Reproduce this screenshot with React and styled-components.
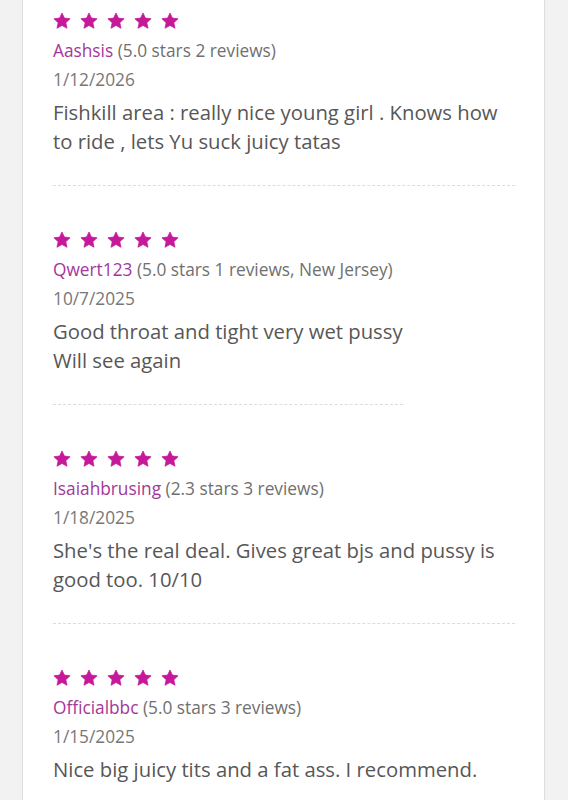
import styled, { createGlobalStyle } from 'styled-components';

const reviews = [
  {
    id: 1,
    name: 'Aashsis',
    meta: '(5.0 stars 2 reviews)',
    date: '1/12/2026',
    lines: ['Fishkill area : really nice young girl . Knows how to ride , lets Yu suck juicy tatas'],
  },
  {
    id: 2,
    name: 'Qwert123',
    meta: '(5.0 stars 1 reviews, New Jersey)',
    date: '10/7/2025',
    lines: ['Good throat and tight very wet pussy', 'Will see again'],
  },
  {
    id: 3,
    name: 'Isaiahbrusing',
    meta: '(2.3 stars 3 reviews)',
    date: '1/18/2025',
    lines: ["She's the real deal. Gives great bjs and pussy is good too. 10/10"],
  },
  {
    id: 4,
    name: 'Officialbbc',
    meta: '(5.0 stars 3 reviews)',
    date: '1/15/2025',
    lines: ['Nice big juicy tits and a fat ass. I recommend.'],
  },
];

const Star = () => (
  <svg width='18' height='18' viewBox='0 0 24 24'>
    <path
      d='M12 1.3L15.2 8.1 22.8 9 17.1 14.2 18.7 21.7 12 17.9 5.3 21.7 6.9 14.2 1.2 9 8.8 8.1Z'
      fill='#c5199a'
      stroke='#c5199a'
      strokeWidth='1'
      strokeLinejoin='round'
    />
  </svg>
);

const App = () => {
  return (
    <>
      <GlobalStyle />
      <Page>
        <Card>
          {reviews.map(review => (
            <Review key={review.id}>
              <Stars>
                {[1, 2, 3, 4, 5].map(n => (
                  <Star key={n} />
                ))}
              </Stars>
              <Author>
                <Name>{review.name}</Name> {review.meta}
              </Author>
              <DateLine>{review.date}</DateLine>
              <Body>
                {review.lines.map((line, i) => (
                  <div key={i}>{line}</div>
                ))}
              </Body>
            </Review>
          ))}
        </Card>
      </Page>
    </>
  );
};

export default App;

const GlobalStyle = createGlobalStyle`
  html, body {
    margin: 0;
    padding: 0;
    background: #f2f2f2;
  }
  body {
    font-family: 'Open Sans', 'Noto Sans', sans-serif;
  }
`;

const Page = styled.div`
  width: 568px;
  height: 800px;
  overflow: hidden;
  background: #f2f2f2;
`;

const Card = styled.div`
  margin-left: 22px;
  width: 523px;
  min-height: 800px;
  box-sizing: border-box;
  background: #fff;
  border-left: 1px solid #dedede;
  border-right: 1px solid #dedede;
  padding: 12px 29px 0 30px;
  display: flex;
  flex-direction: column;
  gap: 45px;
`;

const Review = styled.div`
  display: flex;
  flex-direction: column;
  align-items: flex-start;
`;

const Stars = styled.div`
  display: flex;
  gap: 9px;
  height: 18px;
  margin-bottom: 6px;
`;

const Author = styled.div`
  font-size: 17.3px;
  line-height: 29px;
  color: #707070;
`;

const Name = styled.span`
  color: #a3379a;
`;

const DateLine = styled.div`
  font-size: 17.3px;
  line-height: 29px;
  color: #777;
`;

const Body = styled.div`
  margin-top: 4px;
  width: fit-content;
  max-width: 100%;
  font-size: 20.3px;
  line-height: 29px;
  color: #575757;
  padding-bottom: 29px;
  border-bottom: 1px dashed #dcdcdc;
`;
